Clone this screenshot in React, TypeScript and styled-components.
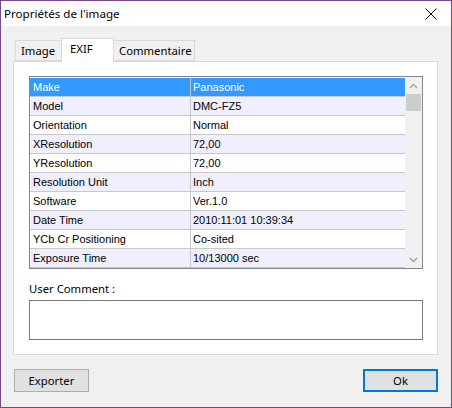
import React from "react";
import styled, { createGlobalStyle } from "styled-components";

const GlobalStyle = createGlobalStyle`
  html, body {
    margin: 0;
    padding: 0;
    background: #f0f0f0;
  }
  * {
    box-sizing: border-box;
  }
`;

const rows: [string, string][] = [
  ["Make", "Panasonic"],
  ["Model", "DMC-FZ5"],
  ["Orientation", "Normal"],
  ["XResolution", "72,00"],
  ["YResolution", "72,00"],
  ["Resolution Unit", "Inch"],
  ["Software", "Ver.1.0"],
  ["Date Time", "2010:11:01 10:39:34"],
  ["YCb Cr Positioning", "Co-sited"],
  ["Exposure Time", "10/13000 sec"],
];

const Window = styled.div`
  width: 452px;
  height: 408px;
  border: 1px solid #74488a;
  background: #f0f0f0;
  display: flex;
  flex-direction: column;
  font-family: "Noto Sans", "Open Sans", sans-serif;
  font-size: 11.3px;
  color: #000;
`;

const TitleBar = styled.div`
  height: 25px;
  background: #fff;
  display: flex;
  align-items: center;
  justify-content: space-between;
  padding: 0 8px 0 3px;
`;

const Title = styled.span`
  font-size: 11.6px;
  line-height: 16px;
`;

const CloseButton = styled.button`
  width: 24px;
  height: 20px;
  border: none;
  background: transparent;
  padding: 0;
  display: flex;
  align-items: center;
  justify-content: center;
`;

const Body = styled.div`
  flex: 1;
  display: flex;
  flex-direction: column;
  padding: 12px 13px 0 12px;
`;

const TabStrip = styled.div`
  display: flex;
  align-items: flex-end;
  height: 23px;
  padding-left: 2px;
`;

const Tab = styled.div<{ $active?: boolean; $width: number }>`
  width: ${(p) => p.$width}px;
  height: ${(p) => (p.$active ? "24px" : "21px")};
  margin-bottom: ${(p) => (p.$active ? "-1px" : "0")};
  padding: ${(p) => (p.$active ? "0 0 4px 8px" : "0 0 0 5px")};
  border: 1px solid #d9d9d9;
  border-bottom: ${(p) => (p.$active ? "none" : "1px solid #d9d9d9")};
  margin-left: ${(p) => (p.$active ? "-1px" : "0")};
  margin-right: ${(p) => (p.$active ? "-1px" : "0")};
  background: ${(p) => (p.$active ? "#fff" : "#f0f0f0")};
  position: relative;
  z-index: ${(p) => (p.$active ? 1 : 0)};
  display: flex;
  align-items: center;
  line-height: 16px;
  white-space: nowrap;
`;

const Panel = styled.div`
  height: 294px;
  background: #fff;
  border: 1px solid #d9d9d9;
  padding: 14px 14px 14px 15px;
  display: flex;
  flex-direction: column;
`;

const ListBox = styled.div`
  height: 193px;
  border: 1px solid #828790;
  display: flex;
`;

const Rows = styled.div`
  flex: 1;
  display: flex;
  flex-direction: column;
  padding-top: 1px;
`;

const Row = styled.div<{ $selected?: boolean; $alt?: boolean }>`
  height: 19px;
  display: grid;
  grid-template-columns: 161px 1fr;
  background: ${(p) => (p.$selected ? "#3399ff" : p.$alt ? "#efeffe" : "#fff")};
  color: ${(p) => (p.$selected ? "#fff" : "#000")};
  border-bottom: 1px solid #c8c8c8;
  font-family: "Liberation Sans", Arial, sans-serif;
  font-size: 11px;
`;

const Cell = styled.div<{ $first?: boolean }>`
  padding-left: ${(p) => (p.$first ? "3px" : "2px")};
  border-right: ${(p) => (p.$first ? "1px solid #c8c8c8" : "none")};
  line-height: 18px;
  white-space: nowrap;
  overflow: hidden;
`;

const ScrollBar = styled.div`
  width: 17px;
  background: #f0f0f0;
  display: flex;
  flex-direction: column;
`;

const ScrollArrow = styled.div`
  height: 17px;
  display: flex;
  align-items: center;
  justify-content: center;
`;

const ScrollTrack = styled.div`
  flex: 1;
  padding: 0 1px;
`;

const Thumb = styled.div`
  height: 17px;
  background: #cdcdcd;
`;

const Label = styled.div`
  margin-top: 12px;
  line-height: 16px;
`;

const CommentBox = styled.textarea`
  margin-top: 3px;
  height: 41px;
  border: 1px solid #7a7a7a;
  resize: none;
  outline: none;
  background: #fff;
`;

const Footer = styled.div`
  display: flex;
  justify-content: space-between;
  padding: 14px 0 0 1px;
`;

const Button = styled.button<{ $default?: boolean }>`
  width: 75px;
  height: 23px;
  background: #e1e1e1;
  border: ${(p) => (p.$default ? "2px solid #0078d7" : "1px solid #adadad")};
  font-family: "Noto Sans", "Open Sans", sans-serif;
  font-size: 11.3px;
  color: #000;
  padding: 0;
`;

const Chevron: React.FC<{ up?: boolean }> = ({ up }) => (
  <svg width="9" height="6" viewBox="0 0 9 6">
    <path
      d={up ? "M1 5 L4.5 1.5 L8 5" : "M1 1 L4.5 4.5 L8 1"}
      fill="none"
      stroke="#a0a0a0"
      strokeWidth="1.3"
    />
  </svg>
);

const App: React.FC = () => {
  return (
    <>
      <GlobalStyle />
      <Window>
        <TitleBar>
          <Title>Propriétés de l'image</Title>
          <CloseButton>
            <svg width="12" height="12" viewBox="0 0 12 12">
              <path d="M0.5 0.5 L11.5 11.5 M11.5 0.5 L0.5 11.5" stroke="#000" strokeWidth="1" />
            </svg>
          </CloseButton>
        </TitleBar>
        <Body>
          <TabStrip>
            <Tab $width={47}>Image</Tab>
            <Tab $active $width={53}>EXIF</Tab>
            <Tab $width={82}>Commentaire</Tab>
          </TabStrip>
          <Panel>
            <ListBox>
              <Rows>
                {rows.map(([k, v], i) => (
                  <Row key={k} $selected={i === 0} $alt={i % 2 === 1}>
                    <Cell $first>{k}</Cell>
                    <Cell>{v}</Cell>
                  </Row>
                ))}
              </Rows>
              <ScrollBar>
                <ScrollArrow>
                  <Chevron up />
                </ScrollArrow>
                <ScrollTrack>
                  <Thumb />
                </ScrollTrack>
                <ScrollArrow>
                  <Chevron />
                </ScrollArrow>
              </ScrollBar>
            </ListBox>
            <Label>User Comment :</Label>
            <CommentBox />
          </Panel>
          <Footer>
            <Button>Exporter</Button>
            <Button $default>Ok</Button>
          </Footer>
        </Body>
      </Window>
    </>
  );
};

export default App;
